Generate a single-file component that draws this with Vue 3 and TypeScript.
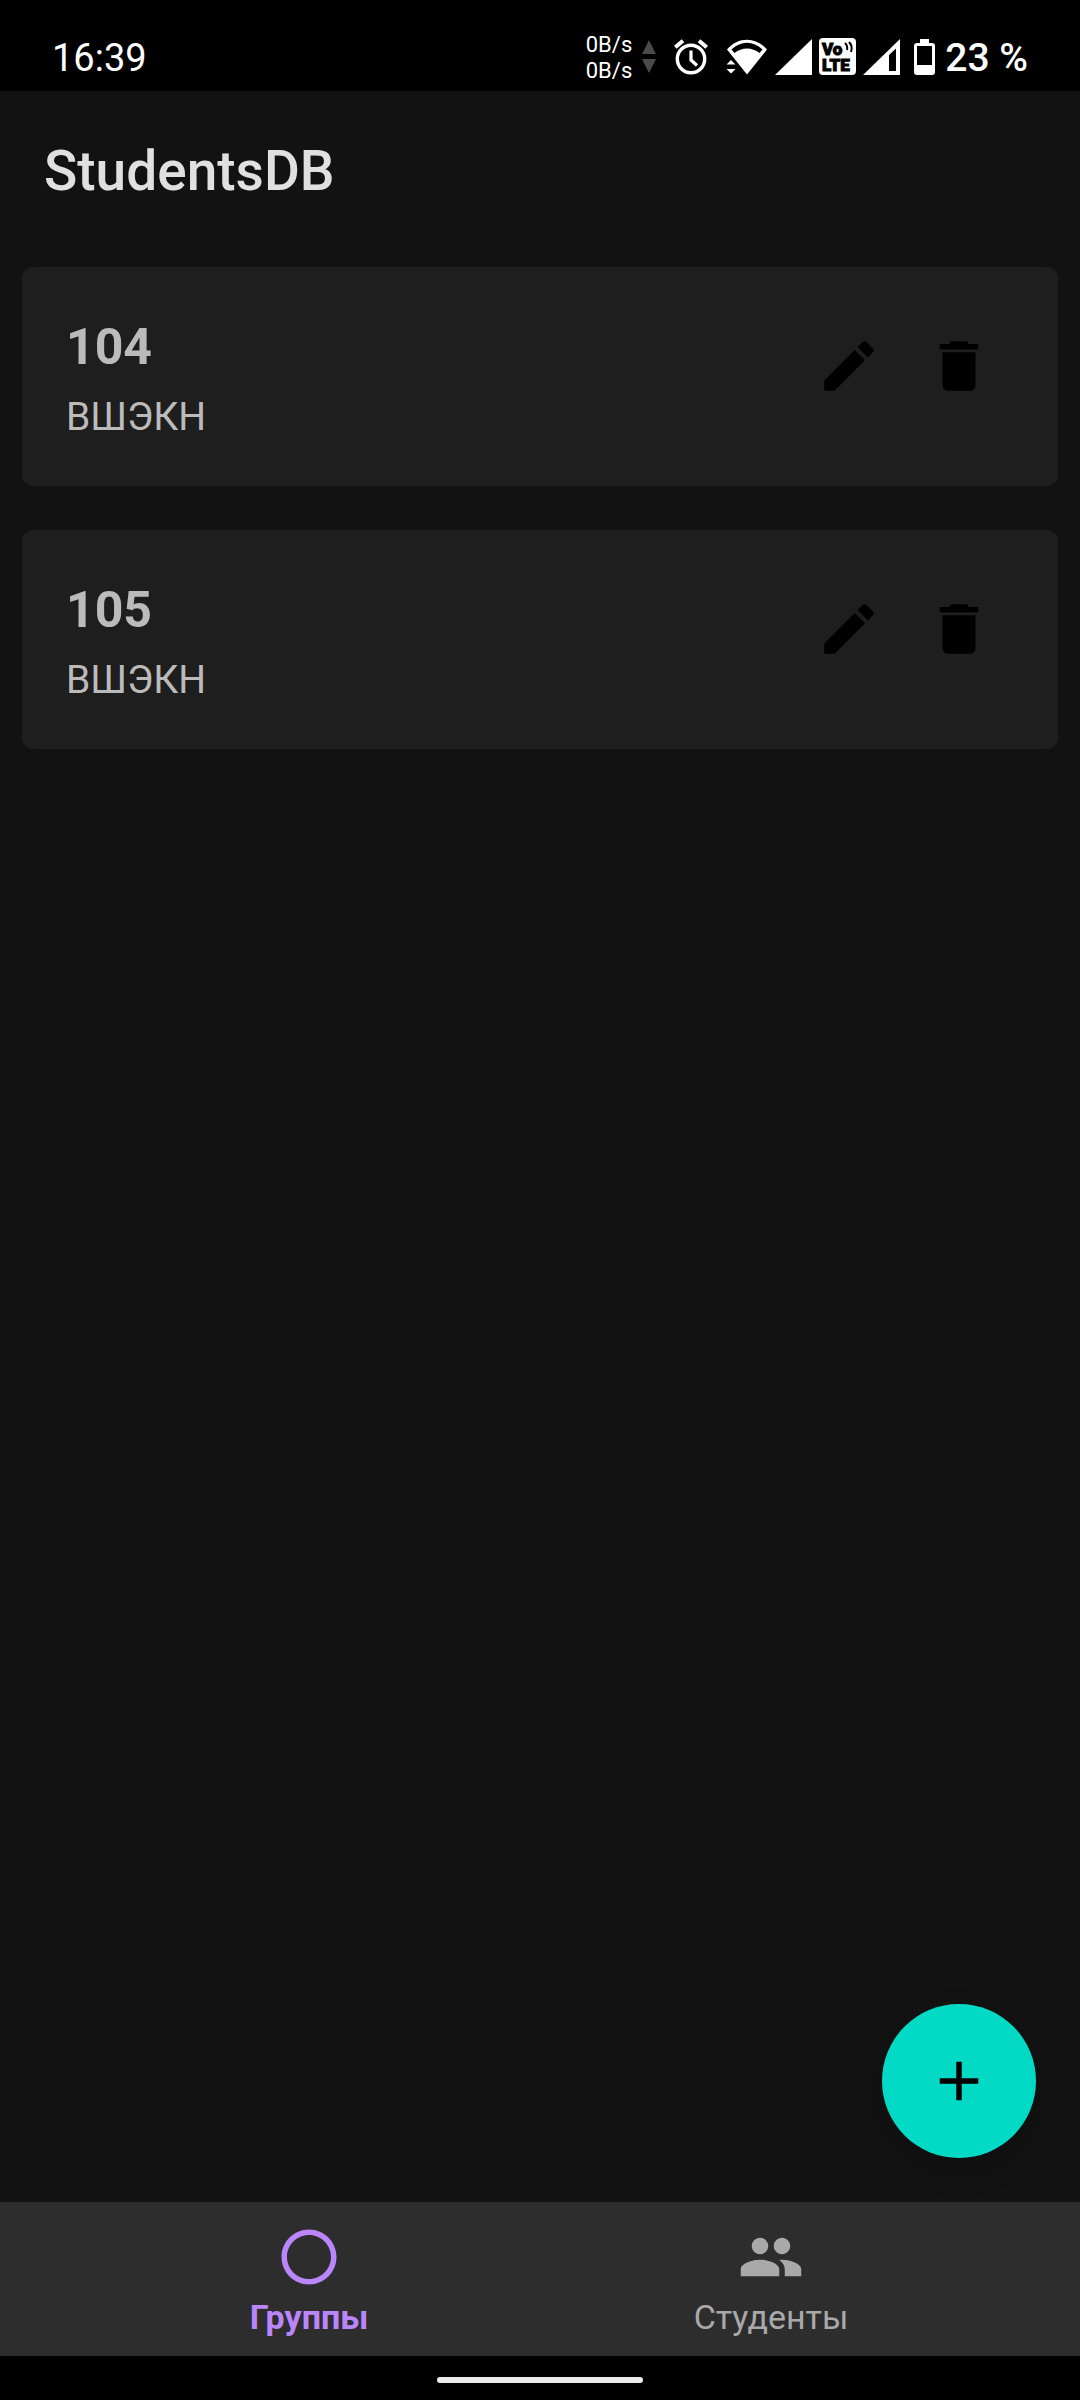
<script setup lang="ts">
import { ref } from 'vue'

interface Group {
  id: number
  name: string
  faculty: string
}

type Tab = 'groups' | 'students'

const groups = ref<Group[]>([
  { id: 1, name: '104', faculty: 'ВШЭКН' },
  { id: 2, name: '105', faculty: 'ВШЭКН' },
])

const activeTab = ref<Tab>('groups')

function removeGroup(id: number): void {
  groups.value = groups.value.filter((group) => group.id !== id)
}
</script>

<template>
  <div class="screen">
    <div class="status-bar">
      <span class="clock">16:39</span>
      <div class="status-icons">
        <div class="traffic">
          <div class="traffic-rates">
            <span>0B/s</span>
            <span>0B/s</span>
          </div>
          <svg width="14" height="34" viewBox="0 0 14 34" fill="#4a4a4a" aria-hidden="true">
            <path d="M7 0l7 14H0zM7 33L0 19h14z" />
          </svg>
        </div>
        <svg width="34" height="36" viewBox="0 0 34 36" fill="none" stroke="#fff" aria-hidden="true">
          <circle cx="17" cy="20" r="13.7" stroke-width="3.4" />
          <path d="M17 11.500v9.500l6 5.500" stroke-width="3.200" />
          <path d="M1.300 8.200L9 1.700M32.700 8.200L25 1.700" stroke-width="4" />
        </svg>
        <div class="radio">
          <svg width="42" height="36" viewBox="0 0 42 36" fill="#fff" aria-hidden="true">
            <path
              fill-rule="evenodd"
              d="M21 35.500L1 10.500C12 -2.500 30 -2.500 41 10.500zM5.500 10.500L8.500 14C16 8 26 8 33.500 14L36.500 10.500C27 1.500 15 1.500 5.500 10.500z"
            />
            <path d="M5 19L0 25V34L5 36L10.500 33V26z" fill="#000" />
            <path d="M5 21l4.500 4.500H0.500zM5 34.500L0.500 30h9z" />
          </svg>
          <svg width="37" height="36" viewBox="0 0 37 36" fill="#fff" aria-hidden="true">
            <path d="M37 0v36H0z" />
          </svg>
          <svg width="37" height="37" viewBox="0 0 37 37" aria-label="VoLTE" role="img">
            <rect width="37" height="37" rx="4" fill="#fff" />
            <text class="volte-text" x="3" y="17">Vo</text>
            <text class="volte-text" x="3" y="33">LTE</text>
            <path d="M26 5q3 3 2 7M30 4q4 4 2 10" fill="none" stroke="#000" stroke-width="2" />
          </svg>
          <svg width="37" height="36" viewBox="0 0 37 36" fill="#fff" aria-hidden="true">
            <path fill-rule="evenodd" d="M37 0v36H0zM33 9.500L26 16v16h7z" />
          </svg>
        </div>
        <div class="battery">
          <svg width="21" height="36" viewBox="0 0 21 36" fill="#fff" aria-hidden="true">
            <path
              fill-rule="evenodd"
              d="M6 0h9v4h3a3 3 0 0 1 3 3v26a3 3 0 0 1-3 3H3a3 3 0 0 1-3-3V7a3 3 0 0 1 3-3h3zM3 7v19h15V7z"
            />
          </svg>
          <span>23 %</span>
        </div>
      </div>
    </div>

    <header class="app-bar">
      <h1>StudentsDB</h1>
    </header>

    <main class="content">
      <ul class="cards">
        <li v-for="group in groups" :key="group.id" class="card">
          <div class="card-text">
            <h2>{{ group.name }}</h2>
            <p>{{ group.faculty }}</p>
          </div>
          <div class="card-actions">
            <button type="button" aria-label="Изменить">
              <svg class="icon" viewBox="0 0 24 24" aria-hidden="true">
                <path
                  d="M3 17.250V21h3.750L17.810 9.940l-3.750-3.750L3 17.250zM20.710 7.040c.39-.39.39-1.020 0-1.410l-2.340-2.340c-.39-.39-1.020-.39-1.410 0l-1.830 1.830 3.750 3.750 1.830-1.830z"
                />
              </svg>
            </button>
            <button type="button" aria-label="Удалить" @click="removeGroup(group.id)">
              <svg class="icon" viewBox="0 0 24 24" aria-hidden="true">
                <path
                  d="M6 19c0 1.100.9 2 2 2h8c1.100 0 2-.9 2-2V7H6v12zM19 4h-3.500c0-.55-.45-1-1-1h-5c-.55 0-1 .45-1 1H5v2h14V4z"
                />
              </svg>
            </button>
          </div>
        </li>
      </ul>
      <button type="button" class="fab" aria-label="Добавить">
        <svg class="icon" viewBox="0 0 24 24" aria-hidden="true">
          <path d="M19 13h-6v6h-2v-6H5v-2h6V5h2v6h6v2z" />
        </svg>
      </button>
    </main>

    <nav class="tabs">
      <button type="button" :class="['tab', { active: activeTab === 'groups' }]" @click="activeTab = 'groups'">
        <svg class="icon" viewBox="0 0 24 24" aria-hidden="true">
          <path
            d="M12 2C6.470 2 2 6.470 2 12s4.470 10 10 10 10-4.470 10-10S17.530 2 12 2zm0 18c-4.410 0-8-3.590-8-8s3.590-8 8-8 8 3.590 8 8-3.590 8-8 8z"
          />
        </svg>
        <span>Группы</span>
      </button>
      <button type="button" :class="['tab', { active: activeTab === 'students' }]" @click="activeTab = 'students'">
        <svg class="icon" viewBox="0 0 24 24" aria-hidden="true">
          <path
            d="M16 11c1.660 0 2.990-1.340 2.990-3S17.660 5 16 5c-1.660 0-3 1.340-3 3s1.340 3 3 3zm-8 0c1.660 0 2.990-1.340 2.990-3S9.660 5 8 5C6.340 5 5 6.340 5 8s1.340 3 3 3zm0 2c-2.330 0-7 1.170-7 3.500V19h14v-2.500c0-2.330-4.670-3.500-7-3.500zm8 0c-.29 0-.62.02-.97.05 1.160.84 1.970 1.970 1.970 3.450V19h6v-2.500c0-2.330-4.670-3.500-7-3.500z"
          />
        </svg>
        <span>Студенты</span>
      </button>
    </nav>

    <div class="gesture-bar"><div class="handle"></div></div>
  </div>
</template>

<style>
body {
  margin: 0;
  background: #121212;
}
</style>

<style scoped>
.screen {
  display: flex;
  flex-direction: column;
  min-height: 100vh;
  background: #121212;
  font-family: Roboto, 'Liberation Sans', sans-serif;
}

h1,
h2,
p,
ul {
  margin: 0;
  padding: 0;
}

button {
  border: 0;
  background: none;
  font-family: inherit;
  cursor: pointer;
}

svg {
  display: block;
  flex: none;
}

.icon {
  width: 66px;
  height: 66px;
  fill: currentColor;
}

.status-bar {
  display: flex;
  align-items: center;
  justify-content: space-between;
  box-sizing: border-box;
  height: 91px;
  padding: 22px 52px 0;
  background: #000;
  color: #fff;
}

.clock {
  padding-top: 2px;
  font-size: 38px;
  line-height: 48px;
}

.status-icons {
  display: flex;
  align-items: center;
  gap: 18px;
}

.traffic {
  display: flex;
  align-items: center;
  gap: 10px;
}

.traffic-rates {
  display: flex;
  flex-direction: column;
  padding-top: 2px;
  font-size: 22px;
  line-height: 26px;
}

.radio {
  display: flex;
  align-items: center;
  gap: 7px;
}

.volte-text {
  fill: #000;
  stroke: #000;
  stroke-width: 1px;
  font-size: 17px;
  font-weight: 900;
}

.battery {
  display: flex;
  align-items: center;
  gap: 10px;
  margin-left: -4px;
  font-size: 39px;
  font-weight: 500;
  line-height: 48px;
}

.battery span {
  padding-top: 2px;
}

.app-bar {
  display: flex;
  align-items: center;
  box-sizing: border-box;
  height: 154px;
  padding: 6px 44px 0;
  color: #e0e0e0;
}

.app-bar h1 {
  font-size: 55px;
  font-weight: 500;
  line-height: 64px;
}

.content {
  position: relative;
  flex: 1;
  padding: 22px;
}

.cards {
  display: flex;
  flex-direction: column;
  gap: 44px;
  list-style: none;
}

.card {
  display: flex;
  align-items: flex-start;
  justify-content: space-between;
  padding: 44px;
  border-radius: 11px;
  background: #1e1e1e;
  color: #bbb;
}

.card-text {
  display: flex;
  flex-direction: column;
  gap: 10px;
}

.card-text h2 {
  font-size: 50px;
  font-weight: 700;
  line-height: 72px;
}

.card-text p {
  font-size: 39px;
  line-height: 49px;
}

.card-actions {
  display: flex;
}

.card-actions button {
  padding: 22px;
  color: #000;
}

.fab {
  position: absolute;
  right: 44px;
  bottom: 44px;
  display: flex;
  align-items: center;
  justify-content: center;
  width: 154px;
  height: 154px;
  padding: 0;
  border-radius: 50%;
  background: #03dac5;
  box-shadow: 0 12px 28px rgba(0, 0, 0, 0.2);
  color: #000;
}

.tabs {
  display: flex;
  justify-content: center;
  height: 154px;
  background: #2d2d2d;
}

.tab {
  display: flex;
  flex: 0 1 462px;
  flex-direction: column;
  align-items: center;
  gap: 7px;
  padding: 22px 0 0;
  color: #a9a9a9;
  font-size: 34px;
  line-height: 40px;
}

.tab.active {
  color: #bb86fc;
  font-weight: 700;
}

.gesture-bar {
  display: flex;
  align-items: center;
  justify-content: center;
  box-sizing: border-box;
  height: 44px;
  padding-top: 4px;
  background: #000;
}

.handle {
  width: 206px;
  height: 6px;
  border-radius: 3px;
  background: #ececec;
}
</style>
